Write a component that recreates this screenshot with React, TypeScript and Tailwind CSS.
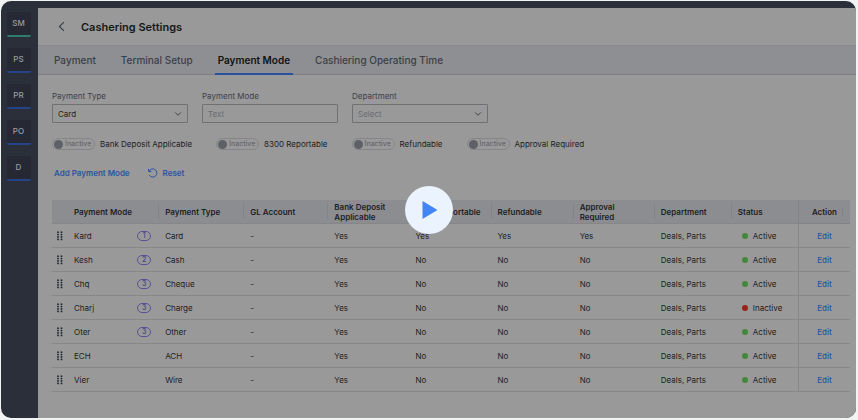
import React from "react";

const railItems = [
  { label: "SM", active: true },
  { label: "PS", active: false },
  { label: "PR", active: false },
  { label: "PO", active: false },
  { label: "D", active: false },
];

const tabs = ["Payment", "Terminal Setup", "Payment Mode", "Cashiering Operating Time"];

const toggles = ["Bank Deposit Applicable", "8300 Reportable", "Refundable", "Approval Required"];

const columns = [
  { label: "Payment Type", width: "w-[85px]" },
  { label: "GL Account", width: "w-[84px]" },
  { label: "Bank Deposit Applicable", width: "w-[81px]" },
  { label: "8300 Reportable", width: "w-[82px]" },
  { label: "Refundable", width: "w-[82px]" },
  { label: "Approval Required", width: "w-[81px]" },
  { label: "Department", width: "w-[77px]" },
  { label: "Status", width: "w-[67px]" },
];

type Row = { mode: string; count?: number; type: string; flag: string; active: boolean };

const rows: Row[] = [
  { mode: "Kard", count: 1, type: "Card", flag: "Yes", active: true },
  { mode: "Kesh", count: 2, type: "Cash", flag: "No", active: true },
  { mode: "Chq", count: 3, type: "Cheque", flag: "No", active: true },
  { mode: "Charj", count: 3, type: "Charge", flag: "No", active: false },
  { mode: "Oter", count: 3, type: "Other", flag: "No", active: true },
  { mode: "ECH", type: "ACH", flag: "No", active: true },
  { mode: "Vier", type: "Wire", flag: "No", active: true },
];

function Chevron() {
  return (
    <svg viewBox="0 0 8 6" className="pointer-events-none col-start-1 row-start-1 mr-[6px] h-[6px] w-[8px] self-center justify-self-end" fill="none" stroke="#3f434b" strokeWidth="1">
      <path d="M1.2 1.4 4 4.3l2.8-2.9" />
    </svg>
  );
}

function SelectField({ id, label, value, muted }: { id: string; label: string; value: string; muted?: boolean }) {
  return (
    <div className="w-[136px]">
      <label htmlFor={id} className="block text-[8px] leading-[12px] text-[#3d4049]">{label}</label>
      <div className="mt-[2px] grid">
        <select
          id={id}
          className={`col-start-1 row-start-1 h-[19px] w-full appearance-none rounded-[1px] border border-[#6f7074] bg-transparent px-[5px] text-[8px] ${muted ? "text-[#696b70]" : "text-[#1e2024]"}`}
        >
          <option>{value}</option>
        </select>
        <Chevron />
      </div>
    </div>
  );
}

function Handle() {
  return (
    <svg viewBox="0 0 6 10" className="ml-[5px] h-[10px] w-[6px]" fill="#23262e">
      {[1.2, 3.6, 6, 8.4].map((y) => (
        <React.Fragment key={y}>
          <circle cx="1" cy={y} r="0.95" />
          <circle cx="4.5" cy={y} r="0.95" />
        </React.Fragment>
      ))}
    </svg>
  );
}

export default function App() {
  return (
    <div className="relative flex min-h-screen flex-col bg-[#f1f4f2] p-px pr-[2px] pb-[2px] font-['Inter','Noto_Sans',sans-serif] text-[#1e2024]">
      <div className="flex grow overflow-hidden rounded-[10px] bg-[#2a2f39] pt-[7px]">
        <nav className="flex w-[37px] shrink-0 flex-col items-center gap-[11px] pt-[4px] pr-[2px]">
          {railItems.map((item) => (
            <button
              key={item.label}
              className={`h-[25px] w-[24px] rounded-[2px] border-b-2 bg-[#262934] pb-px text-[8px] font-medium text-[#9a9b9f] ${item.active ? "border-[#2c7d6b]" : "border-[#244489]"}`}
            >
              {item.label}
            </button>
          ))}
        </nav>

        <main className="min-w-0 grow bg-[#999999]">
          <header className="flex h-[38px] items-center border-b border-[#8a8a8b] pl-[18px]">
            <button aria-label="Back" className="flex h-[16px] w-[10px] items-center justify-center">
              <svg viewBox="0 0 8 12" className="h-[11px] w-[7px]" fill="none" stroke="#3a3d45" strokeWidth="1.3">
                <path d="M6.8 1 1.6 6l5.2 5" />
              </svg>
            </button>
            <h1 className="ml-[15px] text-[11px] leading-[14px] font-semibold text-[#17181b]">Cashering Settings</h1>
          </header>

          <nav className="flex h-[29px] gap-[19px] border-b border-[#7d7e81] bg-[#8e8f92] pl-[13px]">
            {tabs.map((tab) => (
              <button
                key={tab}
                className={`-mb-px h-[29px] border-b-2 px-[3px] pt-px text-[10px] ${tab === "Payment Mode" ? "border-[#2c50a0] font-semibold text-[#111214]" : "border-transparent font-medium text-[#3b3f49]"}`}
              >
                {tab}
              </button>
            ))}
          </nav>

          <div className="pt-[15px] pr-[6px] pl-[14px]">
            <div className="flex gap-[14px]">
              <SelectField id="type" label="Payment Type" value="Card" />
              <div className="w-[136px]">
                <label htmlFor="mode" className="block text-[8px] leading-[12px] text-[#3d4049]">Payment Mode</label>
                <input
                  id="mode"
                  placeholder="Text"
                  className="mt-[2px] block h-[19px] w-full rounded-[1px] border border-[#6f7074] bg-transparent px-[5px] text-[8px] placeholder:text-[#696b70]"
                />
              </div>
              <SelectField id="department" label="Department" value="Select" muted />
            </div>

            <div className="mt-[15px] flex h-[12px] items-center gap-[24px]">
              {toggles.map((label) => (
                <label key={label} className="flex items-center text-[8px] leading-[12px] whitespace-nowrap">
                  <span className="mr-[5px] flex h-[12px] w-[43px] items-center gap-[2px] rounded-full border border-[#868689] pl-px text-[7px] font-medium text-[#66686d]">
                    <input type="checkbox" className="size-[9px] shrink-0 appearance-none rounded-full bg-[#5d6067]" />
                    Inactive
                  </span>
                  {label}
                </label>
              ))}
            </div>

            <div className="mt-[16px] flex h-[14px] items-center gap-[18px] pl-[2px] text-[8px] font-semibold text-[#2e549f]">
              <button>Add Payment Mode</button>
              <button className="flex items-center gap-[5px]">
                <svg viewBox="0 0 10 10" className="size-[10px]" fill="none" stroke="currentColor" strokeWidth="1">
                  <path d="M.6.8v2.7h2.7M1 3.4A4.1 4.1 0 1 1 1.2 7" />
                </svg>
                Reset
              </button>
            </div>

            <table className="mt-[20px] w-full table-fixed border-separate border-spacing-0 text-left text-[8px] leading-[10px]">
              <thead>
                <tr className="h-[24px] bg-[#8c8d90]">
                  <th className="w-[15px] border-b border-[#868789]" aria-label="Reorder" />
                  <th className="w-[91px] border-b border-[#868789] py-0 pl-[7px] font-semibold">Payment Mode</th>
                  {columns.map((c) => (
                    <th key={c.label} className={`${c.width} border-b border-[#868789] p-0 font-semibold`}>
                      <div className={`flex h-[15px] items-center border-l pl-[6px] ${c.label.includes(" ") && c.label !== "8300 Reportable" ? "pr-[12px]" : "pr-0"} border-[#828387]`}>
                        {c.label}
                      </div>
                    </th>
                  ))}
                  <th className="w-[52px] border-b border-l border-[#828387] p-0 font-semibold">
                    <div className="mr-[7px] border-r border-[#828387] pl-[13px]">Action</div>
                  </th>
                </tr>
              </thead>
              <tbody>
                {rows.map((r) => (
                  <tr key={r.mode} className="h-[24px] *:border-b *:border-[#878789] *:p-0">
                    <td><Handle /></td>
                    <td>
                      <div className="flex items-center justify-between pr-[7px] pl-[7px]">
                        {r.mode}
                        {r.count && (
                          <span className="flex h-[10px] w-[14px] items-center justify-center rounded-full border border-[#5a5193] text-[7px] font-medium text-[#473c8a]">
                            {r.count}
                          </span>
                        )}
                      </div>
                    </td>
                    <td><div className="pl-[7px]">{r.type}</div></td>
                    <td><div className="pl-[7px]">-</div></td>
                    <td><div className="pl-[7px]">Yes</div></td>
                    <td><div className="pl-[7px]">{r.flag}</div></td>
                    <td><div className="pl-[7px]">{r.flag}</div></td>
                    <td><div className="pl-[7px]">{r.flag}</div></td>
                    <td><div className="pl-[7px]">Deals, Parts</div></td>
                    <td>
                      <div className="flex items-center gap-[5px] pl-[11px]">
                        <span className={`size-[6px] rounded-full ${r.active ? "bg-[#42883a]" : "bg-[#9a2318]"}`} />
                        {r.active ? "Active" : "Inactive"}
                      </div>
                    </td>
                    <td className="border-l pr-[2px] text-center">
                      <button className="font-medium text-[#2c529f]">Edit</button>
                    </td>
                  </tr>
                ))}
              </tbody>
            </table>
          </div>
        </main>
      </div>

      <button
        aria-label="Play video"
        className="absolute top-1/2 left-1/2 flex size-[48px] -translate-x-1/2 -translate-y-1/2 items-center justify-center rounded-full bg-[#ebf3fe]"
      >
        <svg viewBox="0 0 16 18" className="ml-[2px] h-[18px] w-[16px]" fill="#4285f4">
          <path d="M.5 0v18L15.5 9z" />
        </svg>
      </button>
    </div>
  );
}
